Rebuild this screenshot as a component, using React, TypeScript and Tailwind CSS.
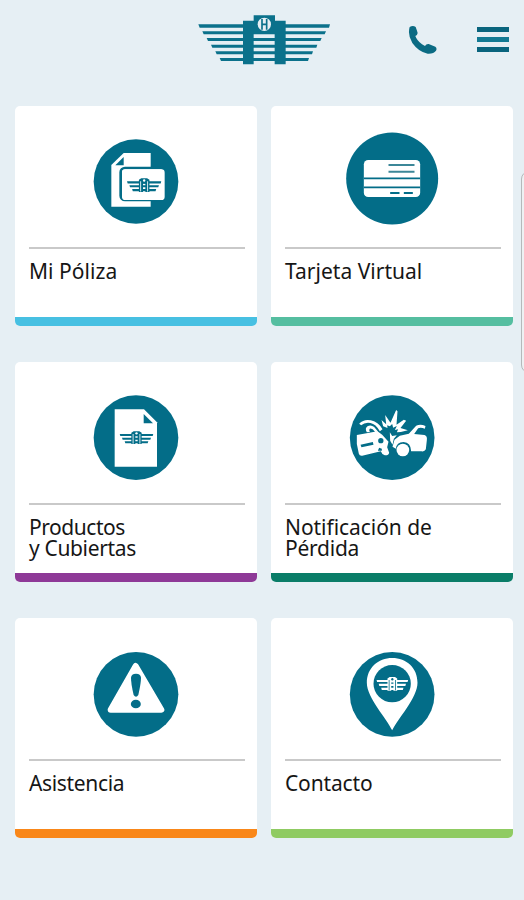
import type { ReactNode } from "react";

const TEAL = "#036d88";

function Wings({ x, y, w, h, color, hole }: { x: number; y: number; w: number; h: number; color: string; hole: string }) {
  return (
    <svg x={x} y={y} width={w} height={h} viewBox="0 0 103 40" preserveAspectRatio="none">
      <g fill={color}>
        <path d="M1 9H102L100 15H3ZM8 20H95L93 26H10ZM16 31H87L85 37H18Z" />
        <path d="M36 5L43 1H60L67 5V39H55V16H48V39H36Z" />
      </g>
      <g fill={hole}>
        <path d="M40 9H42.500V38H40ZM60.500 9H63V38H60.500Z" />
        <circle cx="51.500" cy="7" r="3.500" />
      </g>
    </svg>
  );
}

function Logo() {
  return (
    <svg className="h-[50px] w-[134px]" viewBox="24 30 402 150" role="img" aria-label="Logo">
      <g fill="#0b718b">
        <path d="M25 58H420L417 68H29ZM37 79H408L404 88H41ZM50 99H395L391 108H54ZM63 119H382L379 128H67ZM76 139H369L366 148H80ZM89 159H357L354 168H93Z" />
        <path d="M159 47H191V31H255V47H287V178H254V84H191V178H159Z" />
      </g>
      <circle cx="223" cy="58" r="20" fill="#e6eff4" />
      <path d="M216 42V74M230 42V74M216 58H230" stroke="#0b718b" strokeWidth="5" fill="none" />
    </svg>
  );
}

function Disc({ view, cx = 153, cy, r = 127, children }: { view: string; cx?: number; cy: number; r?: number; children: ReactNode }) {
  return (
    <svg className="size-[100px]" viewBox={view} aria-hidden="true">
      <circle cx={cx} cy={cy} r={r} fill={TEAL} />
      {children}
    </svg>
  );
}

const policy = (
  <Disc view="3 0 300 300" cy={154.5}>
    <path fill="#fff" d="M116 69H197V230H79V105Z" />
    <path fill={TEAL} d="M116 81V106H91Z" />
    <rect x="107" y="114" width="132" height="96" rx="13" fill="#fff" stroke={TEAL} strokeWidth="8" />
    <rect x="111" y="118" width="128" height="92" rx="10" fill="#fff" />
    <Wings x={125} y={144} w={105} h={43} color={TEAL} hole="#fff" />
  </Disc>
);

const card = (
  <Disc view="7.5 15 300 300" cx={158} cy={160.5} r={138}>
    <rect x="73" y="105" width="169" height="111" rx="13" fill="#fff" />
    <path fill={TEAL} d="M73 157.500H242V162.500H73ZM73 184.500H242V189.500H73ZM152 201H180V207H152ZM193 201H220V207H193Z" />
    <path fill="#3c8798" d="M147 117H225V123H147ZM147 137H225V143H147Z" />
  </Disc>
);

const product = (
  <Disc view="3 -6 300 300" cy={149}>
    <path fill="#fff" d="M89 64H177L216 103V236H89Z" />
    <path fill={TEAL} d="M176 78V106H204Z" />
    <Wings x={103} y={129} w={103} h={40} color={TEAL} hole="#fff" />
  </Disc>
);

const crash = (
  <Disc view="1.5 -6 300 300" cx={152} cy={149}>
    <g fill="#fff">
      <path d="M46 141L108 130L122 140L141 161L137 178L143 194Q141 203 130 202Q121 200 118 190L62 203Q54 204 52 197L46 168Z" />
      <path d="M53 107Q68 92 88 97Q112 103 123 124L115 130Q103 108 87 105Q70 102 59 112Z" />
      <path d="M76 133Q69 121 78 115Q88 109 98 117L110 131L101 132Q92 120 85 122Q81 125 85 132Z" />
      <path d="M120 96L134 109L131 81L147 104L164 66L168 70L165 110L187 95L194 98L177 120L199 127L178 132L166 133L170 124L160 126L166 114L155 119L152 108L145 115L137 112L138 120L125 115Z" />
      <path d="M145 133L152 144L166 142L157 152L153 170L146 158Z" />
      <path d="M159 155L175 143L202 137L224 113Q237 107 252 114L250 122Q237 117 230 121L218 138L249 141Q258 144 256 157L253 184Q249 192 240 190H209Q208 163 186 162Q165 163 163 182L153 176Z" />
      <circle cx="184" cy="186" r="19" />
    </g>
    <path fill={TEAL} d="M57 170L94 162L96 170L60 178ZM113 179L121 182L121 188L109 188Z" />
    <circle cx="118" cy="158" r="8" fill={TEAL} />
  </Disc>
);

const alert = (
  <Disc view="3 -9 300 300" cy={148}>
    <path d="M152 63L229 194H77Z" fill="#fff" stroke="#fff" strokeWidth="18" strokeLinejoin="round" />
    <path d="M138 98Q139 86 153 86Q167 86 168 98Q168 113 160 150Q153 160 146 150Q138 116 138 98Z" fill={TEAL} />
    <ellipse cx="152.500" cy="177" rx="15" ry="13" fill={TEAL} />
  </Disc>
);

const contact = (
  <Disc view="1.5 -9 300 300" cx={152} cy={148}>
    <path d="M152 256C137 222 76 158 76 113C76 69 110 39 152 39C195 39 228 69 228 113C228 158 168 222 152 256Z" fill="#fff" />
    <circle cx="152" cy="116" r="56" fill={TEAL} />
    <Wings x={104} y={95} w={97} h={43} color="#fff" hole={TEAL} />
  </Disc>
);

type Line = { text: string; tracking: string };
type Tile = { icon: ReactNode; lines: Line[]; bar: string };

const tiles: Tile[] = [
  { icon: policy, lines: [{ text: "Mi Póliza", tracking: "tracking-[0.05px]" }], bar: "bg-[#47c0e2]" },
  { icon: card, lines: [{ text: "Tarjeta Virtual", tracking: "tracking-[0.02px]" }], bar: "bg-[#55bea0]" },
  {
    icon: product,
    lines: [
      { text: "Productos", tracking: "tracking-[-0.45px]" },
      { text: "y Cubiertas", tracking: "tracking-[-0.35px]" },
    ],
    bar: "bg-[#8e3997]",
  },
  {
    icon: crash,
    lines: [
      { text: "Notificación de", tracking: "tracking-[-0.05px]" },
      { text: "Pérdida", tracking: "tracking-[-0.25px]" },
    ],
    bar: "bg-[#0a7d68]",
  },
  { icon: alert, lines: [{ text: "Asistencia", tracking: "tracking-[-0.35px]" }], bar: "bg-[#f98719]" },
  { icon: contact, lines: [{ text: "Contacto", tracking: "tracking-[-0.15px]" }], bar: "bg-[#8fcb62]" },
];

function TileCard({ icon, lines, bar }: Tile) {
  return (
    <button className="flex h-[220px] flex-col overflow-hidden rounded-[5px] bg-white text-left">
      <span className="flex h-[141px] w-full justify-center pt-6">{icon}</span>
      <span className="mx-3.5 block h-0.5 w-[216px] bg-[#c9c9c9]" />
      <span className="flex flex-1 flex-col px-3.5 pt-3 text-[21px] leading-[21px] text-[#161616]">
        {lines.map((line) => (
          <span key={line.text} className={`whitespace-nowrap ${line.tracking}`}>{line.text}</span>
        ))}
      </span>
      <span className={`block h-[9px] w-full ${bar}`} />
    </button>
  );
}

export default function App() {
  return (
    <div className="relative h-[900px] w-[524px] overflow-hidden bg-[#e6eff4] font-['Noto_Sans',sans-serif]">
      <header className="flex h-[106px] items-start pt-[15px] pl-[198px]">
        <Logo />
        <button aria-label="Llamar" className="mt-[10px] ml-[76px]">
          <svg className="h-[30px] w-[30px]" viewBox="54 45 90 90">
            <path d="M59 51Q69 45 77 51Q80 59 83 69Q82 76 76 78Q81 92 96 103L105 108Q109 101 116 102L136 110Q142 115 138 122Q131 132 113 131Q86 126 67 99Q52 74 59 51Z" fill="#0b6b83" />
          </svg>
        </button>
        <button aria-label="Menú" className="mt-3 ml-[39px] flex w-8 flex-col gap-[5px]">
          <span className="h-[5px] w-full bg-[#09647d]" />
          <span className="h-[5px] w-full bg-[#127a93]" />
          <span className="h-[5px] w-full bg-[#09647d]" />
        </button>
      </header>
      <main className="grid w-[513px] grid-cols-[242px_242px] gap-x-3.5 gap-y-9 pl-[15px]">
        {tiles.map((tile) => (
          <TileCard key={tile.lines[0].text} {...tile} />
        ))}
      </main>
      <div className="absolute top-[171px] left-[521px] h-[202px] w-4 rounded-[10px] border border-[#b5b9bb] bg-[#eef1f3]" />
    </div>
  );
}
